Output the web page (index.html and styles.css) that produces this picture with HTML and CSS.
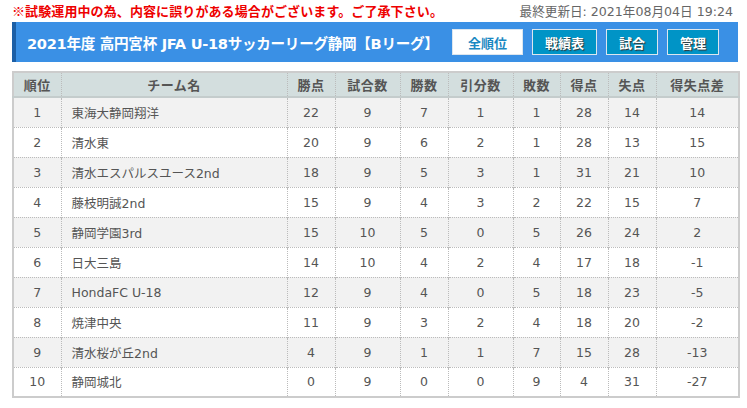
FILE: index.html
```html
<!DOCTYPE html>
<html lang="ja">
<head>
<meta charset="utf-8">
<link rel="stylesheet" href="styles.css">
</head>
<body>
<div class="page">
  <div class="notice">
    <span class="warn">※試験運用中の為、内容に誤りがある場合がございます。ご了承下さい。</span>
    <span class="updated">最終更新日: 2021年08月04日 19:24</span>
  </div>
  <div class="titlebar">
    <h1 class="title">2021年度 高円宮杯 JFA U-18サッカーリーグ静岡【Bリーグ】</h1>
    <nav class="btns">
      <a class="btn active">全順位</a>
      <a class="btn">戦績表</a>
      <a class="btn">試合</a>
      <a class="btn">管理</a>
    </nav>
  </div>
  <table class="standings">
    <colgroup>
      <col class="c-rank"><col class="c-team"><col class="c-n48"><col class="c-n65"><col class="c-n48"><col class="c-n65"><col class="c-n47"><col class="c-n48"><col class="c-n48"><col class="c-diff">
    </colgroup>
    <thead>
      <tr><th>順位</th><th>チーム名</th><th>勝点</th><th>試合数</th><th>勝数</th><th>引分数</th><th>敗数</th><th>得点</th><th>失点</th><th>得失点差</th></tr>
    </thead>
    <tbody>
      <tr><td>1</td><td class="team">東海大静岡翔洋</td><td>22</td><td>9</td><td>7</td><td>1</td><td>1</td><td>28</td><td>14</td><td>14</td></tr>
      <tr><td>2</td><td class="team">清水東</td><td>20</td><td>9</td><td>6</td><td>2</td><td>1</td><td>28</td><td>13</td><td>15</td></tr>
      <tr><td>3</td><td class="team">清水エスパルスユース2nd</td><td>18</td><td>9</td><td>5</td><td>3</td><td>1</td><td>31</td><td>21</td><td>10</td></tr>
      <tr><td>4</td><td class="team">藤枝明誠2nd</td><td>15</td><td>9</td><td>4</td><td>3</td><td>2</td><td>22</td><td>15</td><td>7</td></tr>
      <tr><td>5</td><td class="team">静岡学園3rd</td><td>15</td><td>10</td><td>5</td><td>0</td><td>5</td><td>26</td><td>24</td><td>2</td></tr>
      <tr><td>6</td><td class="team">日大三島</td><td>14</td><td>10</td><td>4</td><td>2</td><td>4</td><td>17</td><td>18</td><td>-1</td></tr>
      <tr><td>7</td><td class="team">HondaFC U-18</td><td>12</td><td>9</td><td>4</td><td>0</td><td>5</td><td>18</td><td>23</td><td>-5</td></tr>
      <tr><td>8</td><td class="team">焼津中央</td><td>11</td><td>9</td><td>3</td><td>2</td><td>4</td><td>18</td><td>20</td><td>-2</td></tr>
      <tr><td>9</td><td class="team">清水桜が丘2nd</td><td>4</td><td>9</td><td>1</td><td>1</td><td>7</td><td>15</td><td>28</td><td>-13</td></tr>
      <tr><td>10</td><td class="team">静岡城北</td><td>0</td><td>9</td><td>0</td><td>0</td><td>9</td><td>4</td><td>31</td><td>-27</td></tr>
    </tbody>
  </table>
</div>
</body>
</html>
```
FILE: styles.css
```css
* { box-sizing: border-box; }
html, body { margin: 0; padding: 0; background: #fff; }
body {
  font-family: "DejaVu Sans", "Noto Sans CJK JP", sans-serif;
  color: #555;
}
.page {
  width: 726px;
  margin: 0 0 0 12px;
}
.notice {
  display: flex;
  justify-content: space-between;
  align-items: center;
  height: 20px;
  padding-right: 5px;
}
.warn {
  font-family: "Noto Sans CJK JP", sans-serif;
  color: #ee0000;
  font-weight: bold;
  font-size: 13px;
  letter-spacing: 0.1px;
}
.updated {
  font-size: 12.6px;
  color: #666;
  font-family: "DejaVu Sans", "Noto Sans CJK JP", sans-serif;
}
.titlebar {
  margin-top: 2px;
  height: 40px;
  background: #3a90e5;
  border-left: 4px solid #1c5fa6;
  display: flex;
  align-items: center;
  justify-content: space-between;
  padding: 0 19px 0 11px;
}
.title {
  margin: 0;
  color: #fff;
  font-size: 14.6px;
  font-weight: bold;
  font-family: "DejaVu Sans", "Noto Sans CJK JP", sans-serif;
  letter-spacing: -0.3px;
}
.btns {
  display: flex;
  gap: 9px;
}
.btn {
  display: flex;
  align-items: center;
  justify-content: center;
  height: 26px;
  padding: 0 12px;
  background: #0094c6;
  border: 1px solid #dde6ee;
  color: #fff;
  font-family: "Noto Sans CJK JP", sans-serif;
  font-weight: bold;
  font-size: 13px;
  text-shadow: 1px 1px 1px #333;
}
.btn.active {
  background: #fff;
  color: #1a88c2;
  text-shadow: none;
  padding: 0 15px;
}
.standings {
  margin-top: 9px;
  width: 726px;
  border-collapse: collapse;
  table-layout: fixed;
  border: 2px solid #cccccc;
  font-size: 12.5px;
}
.c-rank { width: 48px; }
.c-team { width: 226px; }
.c-n48 { width: 48px; }
.c-n47 { width: 47px; }
.c-n65 { width: 65px; }
.c-diff { width: 83px; }
.standings th {
  height: 25px;
  background: #d3dede;
  color: #555;
  font-family: "Noto Sans CJK JP", sans-serif;
  font-weight: bold;
  font-size: 13px;
  border-left: 1px dotted #bbb;
  border-bottom: 2px solid #c4cccc;
  padding: 0;
  letter-spacing: 0.5px;
}
.standings td {
  height: 30px;
  text-align: center;
  border-left: 1px dotted #bbb;
  border-top: 1px dotted #bbb;
  padding: 0;
  color: #555;
}
.standings th:first-child, .standings td:first-child { border-left: none; }
.standings tbody tr:nth-child(odd) td { background: #f2f2f2; }
.standings tbody tr:nth-child(even) td { background: #fff; }
.standings td.team {
  text-align: left;
  padding-left: 10px;
  font-family: "DejaVu Sans", "Noto Sans CJK JP", sans-serif;
}
.standings tbody tr:last-child td { border-bottom: 1px dotted #bbb; }
```
